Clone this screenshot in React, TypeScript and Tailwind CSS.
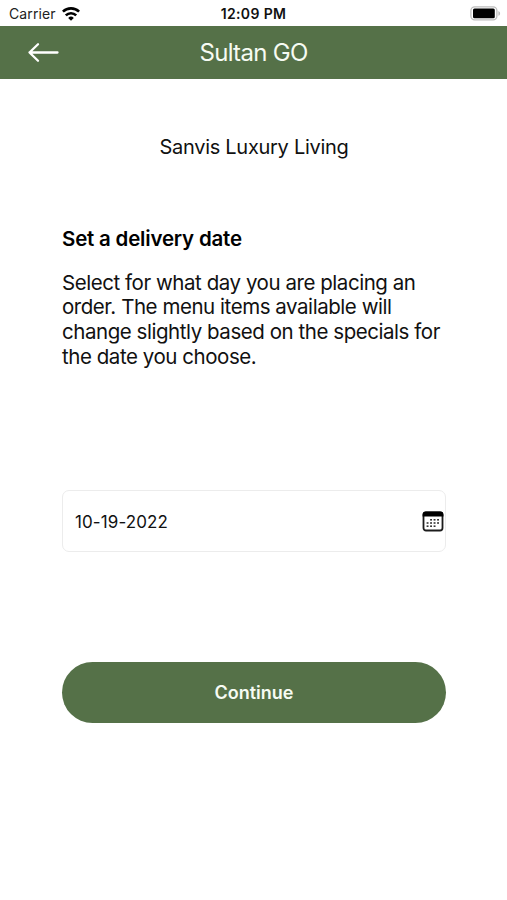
import React from "react";

function WifiIcon() {
  return (
    <svg width="18" height="14" viewBox="0 0 18 14" fill="none" stroke="#000" strokeWidth="2.6">
      <path d="M0.9 4.700a11.500 11.500 0 0 1 16.200 0" />
      <path d="M3.800 8.400a7.400 7.400 0 0 1 10.400 0" />
      <path d="M9 13.700 6.200 10.900a4 4 0 0 1 5.600 0Z" fill="#000" stroke="none" />
    </svg>
  );
}

function BatteryIcon() {
  return (
    <svg width="31" height="15" viewBox="0 0 31 15" fill="none">
      <rect x="0.9" y="0.9" width="26" height="13" rx="3.8" stroke="#bdbdbd" strokeWidth="1.3" />
      <rect x="3" y="2.6" width="21.8" height="9.6" rx="1.5" fill="#000" />
      <path d="M28.4 5v4.800c1-.4 1.700-1.300 1.700-2.400S29.400 5.400 28.400 5Z" fill="#bdbdbd" />
    </svg>
  );
}

function BackArrow() {
  return (
    <svg
      width="32"
      height="22"
      viewBox="0 0 32 22"
      fill="none"
      stroke="#fff"
      strokeWidth="2.3"
      strokeLinecap="round"
      strokeLinejoin="round"
    >
      <path d="M30.500 10.500H2.500M11 2.200 2.500 10.500l8.500 8.300" />
    </svg>
  );
}

const calendarDots = [
  [9, 8.8], [12.5, 8.8], [16, 8.8],
  [5.5, 12], [9, 12], [12.5, 12], [16, 12],
  [5.5, 15.2], [9, 15.2], [12.5, 15.2],
];

function CalendarIcon() {
  return (
    <svg width="22" height="21" viewBox="0 0 22 21" fill="none">
      <rect x="1.5" y="1.5" width="19" height="18" rx="2.5" stroke="#1c1c1c" strokeWidth="1.8" />
      <path d="M0.600 5.500V3.500A2.900 2.900 0 0 1 3.500.6h15a2.900 2.900 0 0 1 2.900 2.900V5.500Z" fill="#000" />
      {calendarDots.map(([x, y]) => (
        <rect key={`${x}-${y}`} x={x - 0.9} y={y - 0.8} width="1.9" height="1.6" fill="#333" />
      ))}
    </svg>
  );
}

export default function App() {
  return (
    <div className="h-[900px] w-[507px] overflow-hidden bg-white font-[Inter,sans-serif] text-[#111]">
      <div className="grid h-[26px] grid-cols-3 items-center px-[6px] pt-[1px]">
        <div className="flex items-center gap-[6px] pl-[3px]">
          <span className="text-[14px] tracking-[0.1px] text-[#222]">Carrier</span>
          <WifiIcon />
        </div>
        <span className="text-center text-[14px] font-semibold tracking-[0.35px] whitespace-nowrap">
          12:09 PM
        </span>
        <div className="flex justify-end">
          <BatteryIcon />
        </div>
      </div>

      <header className="grid h-[53px] grid-cols-3 items-center bg-[#557148]">
        <button className="ml-[27px] w-8">
          <BackArrow />
        </button>
        <h1 className="text-center text-[24px] tracking-[-0.7px] whitespace-nowrap text-[#f6fbf3]">
          Sultan GO
        </h1>
      </header>

      <main className="pr-[61px] pl-[62px]">
        <p className="mt-[54px] text-center text-[20px] leading-7 tracking-[-0.29px]">
          Sanvis Luxury Living
        </p>

        <h2 className="mt-[64px] text-[20.5px] leading-7 font-semibold tracking-[-0.2px] text-black">
          Set a delivery date
        </h2>
        <p className="mt-[17.5px] text-[20.5px] leading-[24.7px] tracking-[-0.45px] whitespace-nowrap">
          Select for what day you are placing an
          <br />
          order. The menu items available will
          <br />
          change slightly based on the specials for
          <br />
          the date you choose.
        </p>

        <div className="mt-[120.5px] flex h-[62px] items-center justify-between rounded-[7px] border border-[#ececec] pt-[2px] pr-px pl-3">
          <span className="pt-px text-[17px] tracking-[0.1px]">10-19-2022</span>
          <CalendarIcon />
        </div>

        <button className="mt-[110px] h-[61px] w-full rounded-full bg-[#557148] text-[18px] font-semibold text-[#f6fbf3]">
          Continue
        </button>
      </main>
    </div>
  );
}
